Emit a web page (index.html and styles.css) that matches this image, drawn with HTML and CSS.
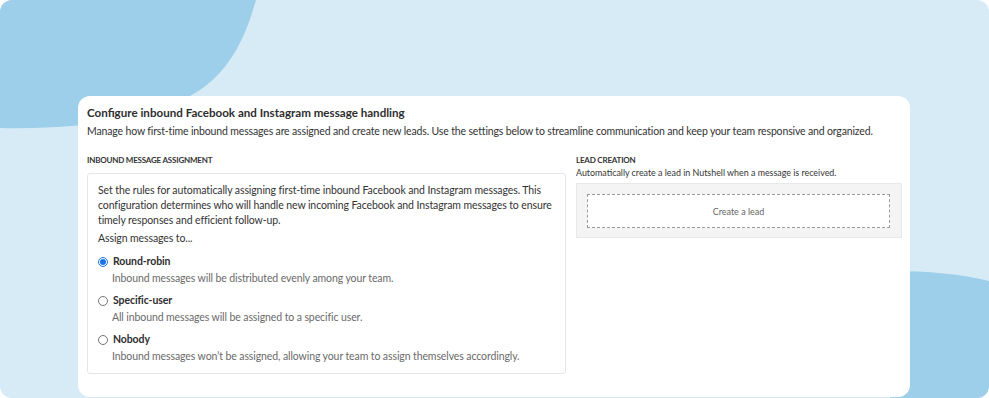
FILE: index.html
```html
<!DOCTYPE html>
<html lang="en">
<head>
    <meta charset="UTF-8">
    <meta name="viewport" content="width=device-width, initial-scale=1.0">
    <title>Message handling settings</title>
    <link rel="stylesheet" href="styles.css">
</head>
<body>
    <div class="frame">
        <!-- background blobs -->
        <svg class="backdrop" width="989" height="398" viewBox="0 0 989 398">
            <path d="M0,0 H256 C246,35 232,68 200,90 C160,116 90,130 0,128 Z" fill="#9ecfea"/>
            <path d="M890,271 C930,271 960,274 989,281 V398 H890 Z" fill="#9ecfea"/>
        </svg>

        <div class="card">
            <h1>Configure inbound Facebook and Instagram message handling</h1>
            <p class="intro">Manage how first-time inbound messages are assigned and create new leads. Use the settings below to streamline communication and keep your team responsive and organized.</p>

            <div class="columns">
                <div class="column">
                    <h2>Inbound message assignment</h2>
                    <div class="assign-box">
                        <p class="lede">Set the rules for automatically assigning first-time inbound Facebook and Instagram messages. This configuration determines who will handle new incoming Facebook and Instagram messages to ensure timely responses and efficient follow-up.</p>
                        <p class="assign-to">Assign messages to...</p>

                        <div class="option">
                            <label><input type="radio" name="assign" checked> Round-robin</label>
                            <div class="option-desc">Inbound messages will be distributed evenly among your team.</div>
                        </div>
                        <div class="option">
                            <label><input type="radio" name="assign"> Specific-user</label>
                            <div class="option-desc">All inbound messages will be assigned to a specific user.</div>
                        </div>
                        <div class="option">
                            <label><input type="radio" name="assign"> Nobody</label>
                            <div class="option-desc">Inbound messages won’t be assigned, allowing your team to assign themselves accordingly.</div>
                        </div>
                    </div>
                </div>

                <div class="column">
                    <h2>Lead creation</h2>
                    <p class="lead-desc">Automatically create a lead in Nutshell when a message is received.</p>
                    <div class="lead-box">
                        <div class="lead-drop">Create a lead</div>
                    </div>
                </div>
            </div>
        </div>
    </div>
</body>
</html>
```

FILE: styles.css
```css
body {
    margin: 0;
    font-family: Lato, 'Noto Sans', sans-serif;
    color: #333;
    background: #fff;
}
.frame {
    position: relative;
    width: 989px;
    height: 398px;
    background-color: #d7ebf6;
    border-radius: 12px;
    overflow: hidden;
}
.backdrop {
    position: absolute;
    top: 0;
    left: 0;
}
.card {
    position: relative;
    box-sizing: border-box;
    margin-left: 78px;
    top: 96px;
    width: 832px;
    height: 301px;
    background: white;
    border-radius: 12px;
    padding: 9px 8px 0 9px;
}
h1 {
    margin: 0;
    font-size: 11.6px;
    font-weight: 700;
    line-height: 16px;
    color: #2e2e2e;
}
.intro {
    margin: 2px 0 0;
    font-size: 10.5px;
    letter-spacing: -0.15px;
    line-height: 16px;
    color: #333;
}
.columns {
    display: grid;
    grid-template-columns: 479px 326px;
    gap: 10px;
    margin-top: 15px;
}
h2 {
    margin: 0;
    font-size: 8px;
    font-weight: 700;
    letter-spacing: -0.2px;
    line-height: 12px;
    text-transform: uppercase;
    color: #333;
}
.assign-box {
    margin-top: 7px;
    border: 1px solid #e6e6e6;
    border-radius: 3px;
    padding: 9px 10px 8px;
    font-size: 10.5px;
    letter-spacing: -0.1px;
}
.lede {
    margin: 0;
    line-height: 15px;
}
.assign-to {
    margin: 3px 0 8px;
    line-height: 15px;
}
.option + .option {
    margin-top: 6px;
}
.option label {
    display: flex;
    align-items: center;
    gap: 5px;
    line-height: 15px;
    font-weight: 700;
    color: #2e2e2e;
}
.option input {
    width: 10px;
    height: 10px;
    margin: 0;
    accent-color: #1a73e8;
}
.option-desc {
    margin-top: 1px;
    padding-left: 14px;
    line-height: 17px;
    color: #6a6a6a;
}
.lead-desc {
    margin: 0;
    font-size: 8.9px;
    line-height: 13px;
    color: #333;
}
.lead-box {
    margin-top: 4px;
    border: 1px solid #e8e8e8;
    background-color: #f4f4f4;
    padding: 10px 11px 9px 10px;
}
.lead-drop {
    height: 32px;
    border: 1px dashed #9a9a9a;
    background: white;
    display: flex;
    align-items: center;
    justify-content: center;
    font-size: 9px;
    color: #666;
}
```
